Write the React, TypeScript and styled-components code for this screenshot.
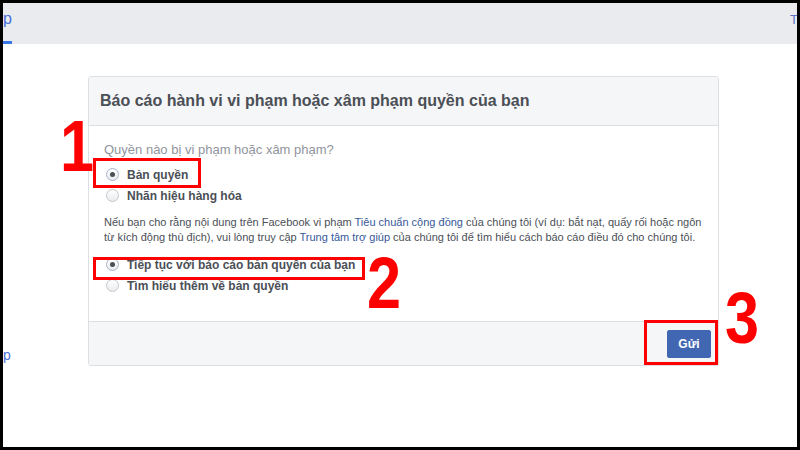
import React from "react";
import styled, { createGlobalStyle } from "styled-components";

const GlobalStyle = createGlobalStyle`
    html, body {
        margin: 0;
        padding: 0;
        background: #000;
    }
    body {
        font-family: "Liberation Sans", Arial, Helvetica, sans-serif;
    }
`;

interface Choice {
    label: string;
    checked: boolean;
}

const rights: Choice[] = [
    { label: "Bản quyền", checked: true },
    { label: "Nhãn hiệu hàng hóa", checked: false },
];

const nextSteps: Choice[] = [
    { label: "Tiếp tục với báo cáo bản quyền của bạn", checked: true },
    { label: "Tìm hiểu thêm về bản quyền", checked: false },
];

interface Mark {
    x: number;
    y: number;
    w: number;
    h: number;
}

// red boxes drawn over the screenshot (page coordinates)
const marks: Mark[] = [
    { x: 93, y: 158, w: 108, h: 30 },
    { x: 93, y: 257, w: 272, h: 23 },
    { x: 644, y: 320, w: 74, h: 45 },
];

const numbers = [
    { text: "1", x: 60, y: 110 },
    { text: "2", x: 367, y: 247 },
    { text: "3", x: 725, y: 282 },
];

const RadioRow: React.FC<{ choice: Choice }> = ({ choice }) => (
    <Row>
        <Radio $checked={choice.checked} />
        <RowLabel>{choice.label}</RowLabel>
    </Row>
);

const App: React.FC = () => {
    return (
        <>
            <GlobalStyle />
            <Page>
                <TopBar>
                    <TabLink $active>p</TabLink>
                    <TopRight>T</TopRight>
                </TopBar>
                <Main>
                    <Gutter>
                        <SideLink>p</SideLink>
                    </Gutter>
                    <Card>
                        <CardHeader>
                            <CardTitle>Báo cáo hành vi vi phạm hoặc xâm phạm quyền của bạn</CardTitle>
                        </CardHeader>
                        <CardBody>
                            <Question>Quyền nào bị vi phạm hoặc xâm phạm?</Question>
                            <Group>
                                {rights.map((c, i) => (
                                    <RadioRow key={i} choice={c} />
                                ))}
                            </Group>
                            <Paragraph>
                                Nếu bạn cho rằng nội dung trên Facebook vi phạm <Link>Tiêu chuẩn cộng đồng</Link> của chúng tôi (ví dụ: bắt nạt, quấy rối hoặc ngôn
                                <br />
                                từ kích động thù địch), vui lòng truy cập <Link>Trung tâm trợ giúp</Link> của chúng tôi để tìm hiểu cách báo cáo điều đó cho chúng tôi.
                            </Paragraph>
                            <Group>
                                {nextSteps.map((c, i) => (
                                    <RadioRow key={i} choice={c} />
                                ))}
                            </Group>
                        </CardBody>
                        <CardFooter>
                            <SubmitButton>Gửi</SubmitButton>
                        </CardFooter>
                    </Card>
                </Main>
                {marks.map((m, i) => (
                    <RedBox key={i} style={{ left: m.x - 3, top: m.y - 3, width: m.w, height: m.h }} />
                ))}
                {numbers.map((n) => (
                    <StepNumber key={n.text} style={{ left: n.x - 3, top: n.y - 3 }}>
                        {n.text}
                    </StepNumber>
                ))}
            </Page>
        </>
    );
};

export default App;

const Page = styled.div`
    position: relative;
    box-sizing: border-box;
    width: 800px;
    height: 450px;
    border: 3px solid #000;
    background: #fff;
    overflow: hidden;
`;

const TopBar = styled.div`
    height: 41px;
    background: #e9ebee;
    display: flex;
    justify-content: space-between;
    align-items: stretch;
`;

const TabLink = styled.div<{ $active?: boolean }>`
    width: 9px;
    box-sizing: border-box;
    font-size: 16px;
    line-height: 16px;
    padding-top: 8px;
    color: #4b6fd9;
    border-bottom: 3px solid ${(p) => (p.$active ? "#3578e5" : "transparent")};
`;

const TopRight = styled.div`
    width: 7px;
    font-size: 13px;
    line-height: 13px;
    padding-top: 10px;
    color: #5b72c8;
`;

const Main = styled.div`
    display: flex;
    align-items: flex-start;
    padding-top: 32px;
`;

const Gutter = styled.div`
    width: 85px;
    padding-top: 272px;
`;

const SideLink = styled.div`
    font-size: 14px;
    line-height: 14px;
    color: #4b6fd9;
`;

const Card = styled.div`
    width: 631px;
    box-sizing: border-box;
    border: 1px solid #dddfe2;
    border-radius: 3px;
    background: #fff;
    overflow: hidden;
`;

const CardHeader = styled.div`
    height: 49px;
    box-sizing: border-box;
    background: #f5f6f7;
    border-bottom: 1px solid #dddfe2;
    display: flex;
    align-items: center;
    padding-left: 11px;
`;

const CardTitle = styled.h2`
    margin: 0;
    font-size: 16px;
    font-weight: bold;
    color: #4b4f56;
`;

const CardBody = styled.div`
    padding: 16px 12px 24px 15px;
    height: 195px;
    box-sizing: border-box;
`;

const Question = styled.div`
    font-size: 13px;
    line-height: 16px;
    color: #90949c;
    margin-bottom: 6px;
`;

const Group = styled.div`
    display: flex;
    flex-direction: column;
`;

const Row = styled.label`
    display: flex;
    align-items: center;
    height: 21px;
    gap: 8px;
    padding-left: 2px;
`;

const Radio = styled.span<{ $checked: boolean }>`
    position: relative;
    width: 13px;
    height: 13px;
    box-sizing: border-box;
    border-radius: 50%;
    border: 1px solid ${(p) => (p.$checked ? "#a7b3cc" : "#c4c7cc")};
    background: linear-gradient(#ffffff, #e9ebee);
    flex-shrink: 0;

    &::after {
        content: "";
        display: ${(p) => (p.$checked ? "block" : "none")};
        position: absolute;
        left: 50%;
        top: 50%;
        width: 5px;
        height: 5px;
        margin: -2.5px 0 0 -2.5px;
        border-radius: 50%;
        background: #4b4f56;
    }
`;

const RowLabel = styled.span`
    font-size: 12px;
    font-weight: bold;
    color: #4b4f56;
`;

const Paragraph = styled.p`
    margin: 9px 0 9px;
    font-size: 11px;
    line-height: 15px;
    color: #4b4f56;
    white-space: nowrap;
`;

const Link = styled.span`
    color: #365899;
`;

const CardFooter = styled.div`
    height: 44px;
    box-sizing: border-box;
    background: #f5f6f7;
    border-top: 1px solid #dddfe2;
    display: flex;
    justify-content: flex-end;
    align-items: flex-start;
    padding: 8px 7px 0 0;
`;

const SubmitButton = styled.button`
    width: 44px;
    height: 28px;
    border: 1px solid #4267b2;
    border-radius: 2px;
    background: #4267b2;
    color: #fff;
    font-family: inherit;
    font-size: 12px;
    font-weight: bold;
    padding: 0;
`;

const RedBox = styled.div`
    position: absolute;
    box-sizing: border-box;
    border: 3px solid #ff0000;
    pointer-events: none;
`;

const StepNumber = styled.div`
    position: absolute;
    font-size: 72px;
    line-height: 1;
    font-weight: bold;
    color: #ff0000;
    transform: scaleX(0.85);
    transform-origin: left top;
`;
